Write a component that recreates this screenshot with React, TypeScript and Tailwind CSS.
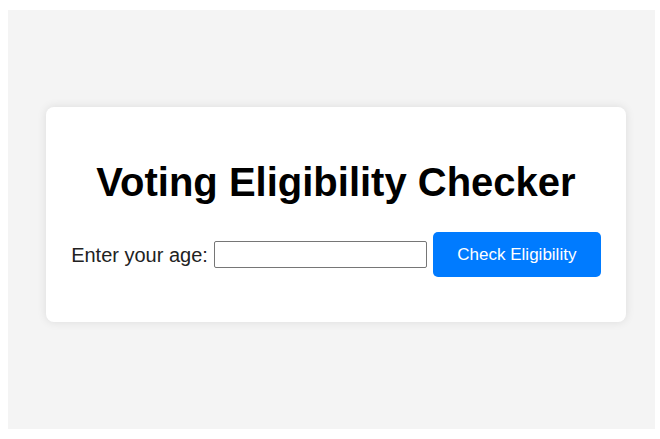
export default function App() {
  return (
    <div className="h-[439px] w-[660px] bg-white pl-[8px] pr-[5px] pt-[10px] pb-[10px]">
      <div className="h-full w-full bg-[#f4f4f4] pl-[38px] pt-[97px] font-['Liberation_Sans',Arial,sans-serif]">
        <div className="w-[580px] rounded-[8px] bg-white px-[25px] pt-[52px] pb-[45px] shadow-[0_0_10px_rgba(0,0,0,0.1)]">
          <h1 className="text-center text-[40px] font-bold leading-[46px] text-black">Voting Eligibility Checker</h1>
          <div className="mt-[27px] flex items-center justify-center">
            <label htmlFor="age" className="text-[20px] text-[#222]">
              Enter your age:
            </label>
            <input
              id="age"
              type="number"
              className="ml-[6px] h-[27px] w-[213px] rounded-[2px] border border-[#767676] bg-white px-1 text-[16px]"
            />
            <button className="ml-[6px] h-[45px] w-[168px] rounded-[5px] bg-[#007bff] text-[17px] text-white">
              Check Eligibility
            </button>
          </div>
        </div>
      </div>
    </div>
  );
}
